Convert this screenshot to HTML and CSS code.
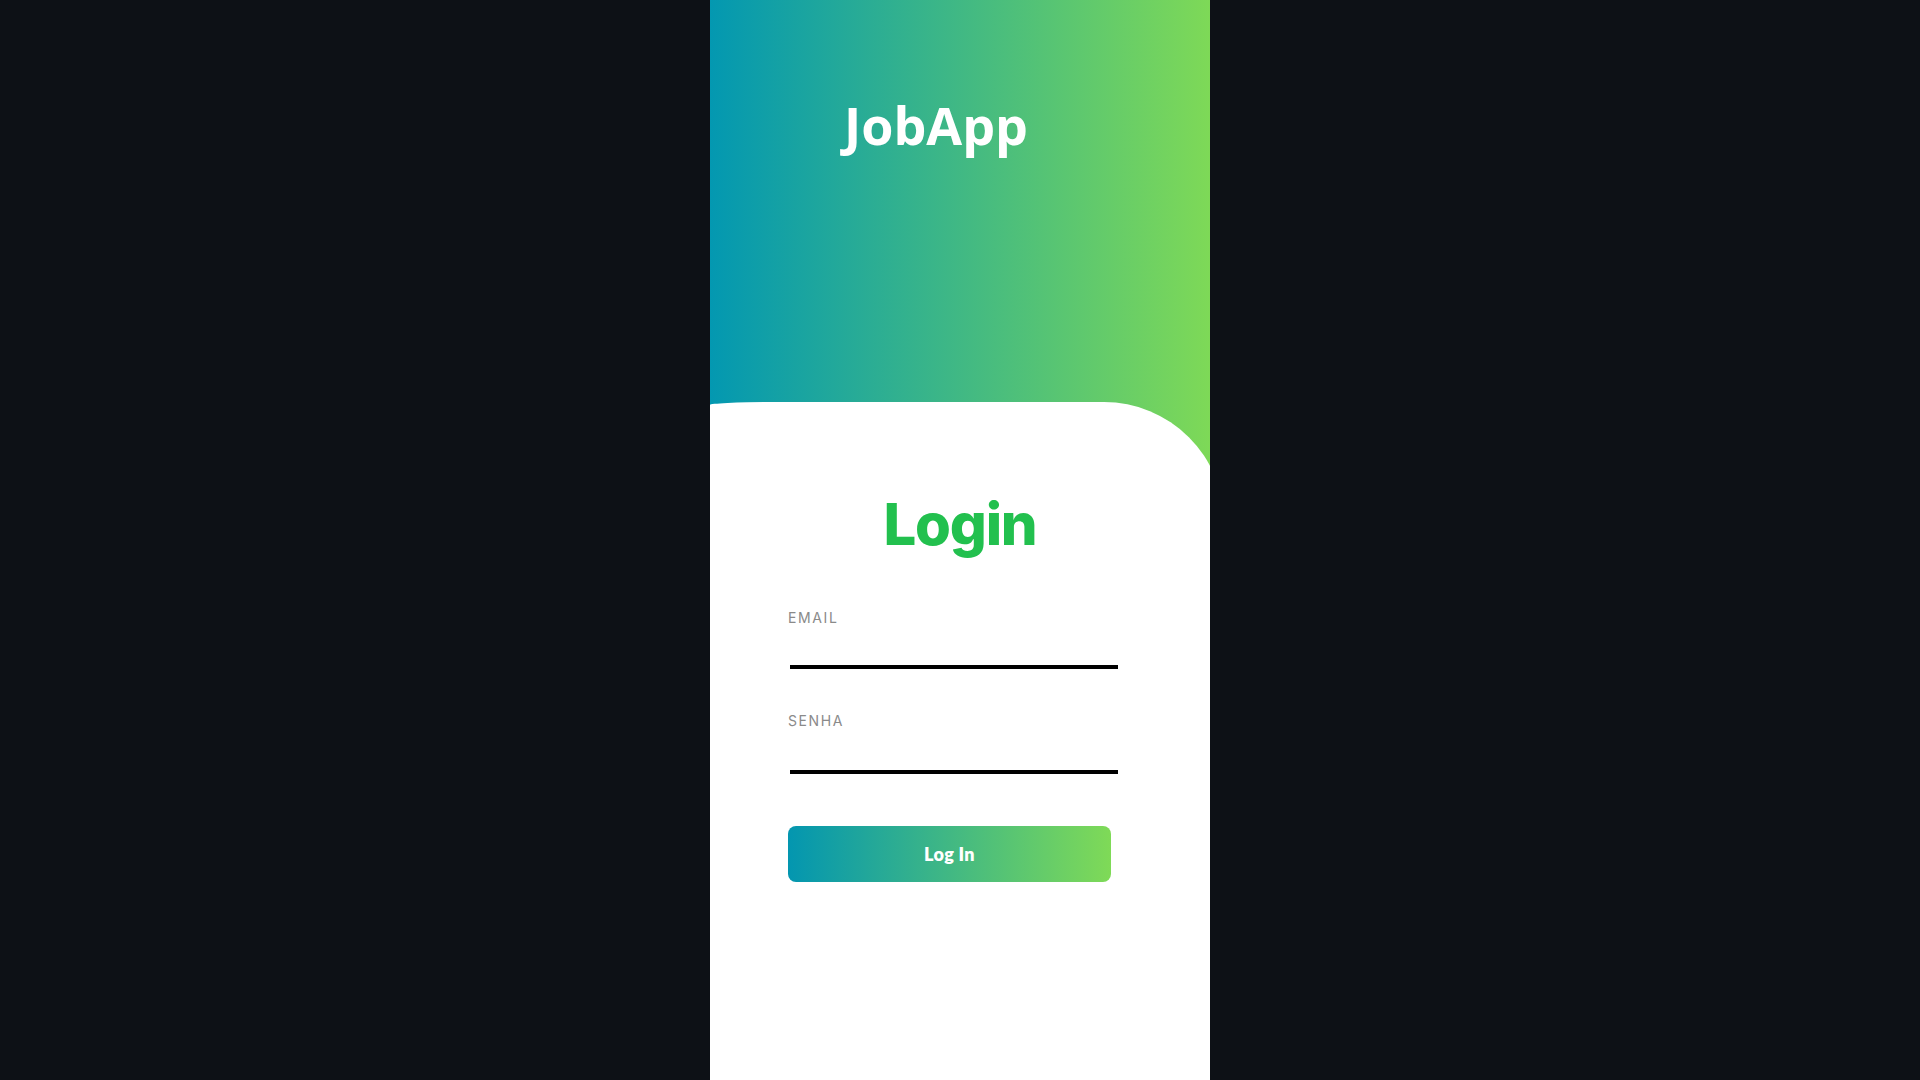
FILE: index.html
```html
<!DOCTYPE html>
<html lang="pt">
<head>
<meta charset="utf-8">
<title>JobApp - Login</title>
<link rel="stylesheet" href="styles.css">
</head>
<body>
<div class="phone">
  <header class="hero">
    <h1 class="brand">JobApp</h1>
  </header>
  <main class="card">
    <h2 class="title">Login</h2>
    <form class="form">
      <label class="field">
        <span class="label">EMAIL</span>
        <input class="input" type="email">
      </label>
      <label class="field">
        <span class="label">SENHA</span>
        <input class="input input-tall" type="password">
      </label>
      <button class="btn" type="button">Log In</button>
    </form>
  </main>
</div>
</body>
</html>
```

FILE: styles.css
```css
* { box-sizing: border-box; }
html, body { margin: 0; padding: 0; height: 100%; }
body {
  background: #0d1116;
  font-family: "Inter", "Noto Sans", sans-serif;
}
.phone {
  width: 500px;
  height: 1080px;
  margin: 0 auto;
  display: flex;
  flex-direction: column;
  overflow: hidden;
  background: linear-gradient(to right, #0398b1, #7ed957);
}
.hero {
  height: 402px;
  flex: none;
  padding-top: 89px;
  padding-left: 134px;
}
.brand {
  margin: 0;
  font-family: "Open Sans", sans-serif;
  font-weight: 700;
  font-size: 52px;
  line-height: normal;
  color: #fff;
}
.card {
  flex: 1;
  background: #fff;
  margin-right: -14px;
  border-top-left-radius: 60px 3px;
  border-top-right-radius: 120px 120px;
  padding-top: 88px;
}
.title {
  margin: 0 14px 0 0;
  text-align: center;
  font-family: "Inter", sans-serif;
  font-weight: 800;
  font-size: 58px;
  line-height: 68px;
  letter-spacing: -1.2px;
  color: #22c04e;
}
.form {
  margin-top: 51px;
  padding-left: 78px;
  width: 500px;
  display: flex;
  flex-direction: column;
}
.field {
  display: flex;
  flex-direction: column;
  margin-bottom: 43px;
}
.label {
  font-family: "Inter", sans-serif;
  font-size: 14px;
  line-height: 17px;
  letter-spacing: 1.6px;
  color: #8a8a8a;
}
.input {
  margin-left: 2px;
  width: 328px;
  height: 43px;
  border: none;
  border-bottom: 4px solid #000;
  outline: none;
  background: transparent;
  font-size: 16px;
}
.input-tall {
  height: 45px;
}
.btn {
  margin-top: 9px;
  width: 323px;
  height: 56px;
  border: none;
  border-radius: 8px;
  background: linear-gradient(to right, #0396b0, #7fda57);
  color: #fff;
  font-family: "Lato", sans-serif;
  font-weight: 800;
  font-size: 18px;
  letter-spacing: 0.3px;
}
```
